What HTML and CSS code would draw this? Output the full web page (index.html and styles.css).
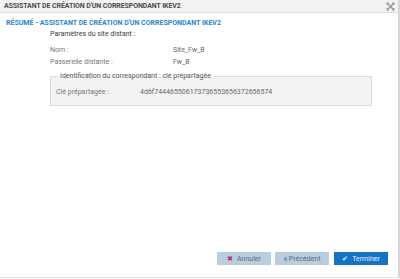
FILE: index.html
```html
<!DOCTYPE html>
<html lang="fr">
<head>
<meta charset="utf-8">
<title>Assistant IKEv2</title>
<link rel="stylesheet" href="styles.css">
</head>
<body>
<div class="window">
  <div class="titlebar">
    <span class="title">ASSISTANT DE CRÉATION D'UN CORRESPONDANT IKEV2</span>
    <svg class="close" width="9" height="9" viewBox="0 0 9 9">
      <path d="M1 1L8 8M8 1L1 8" stroke="#9a9a9a" stroke-width="1.6"/>
      <path d="M1 1h2M1 1v2M8 1h-2M8 1v2M1 8h2M1 8v-2M8 8h-2M8 8v-2" stroke="#9a9a9a" stroke-width="1"/>
    </svg>
  </div>
  <div class="content">
    <h2 class="subtitle">RÉSUMÉ - ASSISTANT DE CRÉATION D'UN CORRESPONDANT IKEV2</h2>
    <div class="summary">
      <div class="section-title">Paramètres du site distant :</div>
      <div class="row"><span class="label">Nom :</span><span class="value">Site_Fw_B</span></div>
      <div class="row"><span class="label">Passerelle distante :</span><span class="value">Fw_B</span></div>
      <fieldset class="box">
        <legend>Identification du correspondant : clé prépartagée</legend>
        <div class="row"><span class="label short">Clé prépartagée :</span><span class="value">4d6f744465506173736553656372656574</span></div>
      </fieldset>
    </div>
    <div class="actions">
      <button class="btn"><span class="ico ico-x">✖</span>Annuler</button>
      <button class="btn"><span class="ico ico-prev">«</span>Précédent</button>
      <button class="btn btn-primary"><span class="ico">✔</span>Terminer</button>
    </div>
  </div>
</div>
</body>
</html>
```

FILE: styles.css
```css
* {
    margin: 0;
    padding: 0;
    box-sizing: border-box;
}
body {
    width: 400px;
    height: 279px;
    font-family: Roboto, "Liberation Sans", sans-serif;
    font-size: 7px;
    color: #555;
    background: #fff;
}
.window {
    height: 278px;
    display: flex;
    flex-direction: column;
    border-right: 2px solid #d6d6d6;
    border-bottom: 1px solid #e2e2e2;
}
.titlebar {
    height: 13px;
    display: flex;
    align-items: center;
    justify-content: space-between;
    padding: 0 3px 0 4px;
    background: #f2f2f2;
    border-bottom: 1px solid #dedede;
}
.title {
    font-weight: bold;
    font-size: 7px;
    color: #4a4a4a;
    letter-spacing: -0.1px;
}
.content {
    flex: 1;
    display: flex;
    flex-direction: column;
    padding: 0 10px 12px 6px;
}
.subtitle {
    font-size: 7px;
    font-weight: bold;
    color: #2a86cc;
    margin-top: 5px;
    line-height: 10px;
}
.summary {
    padding-left: 44px;
    padding-right: 16px;
    margin-top: 1px;
}
.section-title {
    color: #3a3a3a;
    line-height: 10px;
    margin-bottom: 6px;
}
.row {
    display: flex;
    line-height: 10px;
    margin-bottom: 2px;
    color: #777;
}
.label {
    width: 123px;
}
.label.short {
    width: 84px;
}
.value {
    color: #666;
}
.box {
    margin-top: 5px;
    border: 1px solid #dcdcdc;
    background: #f3f3f3;
    padding: 5px 5px 6px;
}
.box legend {
    padding: 0 3px;
    margin-left: 1px;
    color: #555;
    line-height: 8px;
}
.box .row {
    margin-top: 2px;
}
.actions {
    margin-top: auto;
    display: flex;
    justify-content: flex-end;
    gap: 4px;
}
.btn {
    width: 54px;
    height: 13px;
    border: none;
    background: #b9cde1;
    color: #5a6a7a;
    font-family: Roboto, "Liberation Sans", sans-serif;
    font-size: 7px;
    display: flex;
    align-items: center;
    justify-content: center;
}
.btn-primary {
    margin-left: 1px;
    background: #1673c4;
    color: #e8f1fa;
}
.ico {
    margin-right: 4px;
    font-size: 7px;
}
.ico-x {
    color: #b0287a;
}
.ico-prev {
    font-size: 9px;
    margin-right: 1px;
}
```
